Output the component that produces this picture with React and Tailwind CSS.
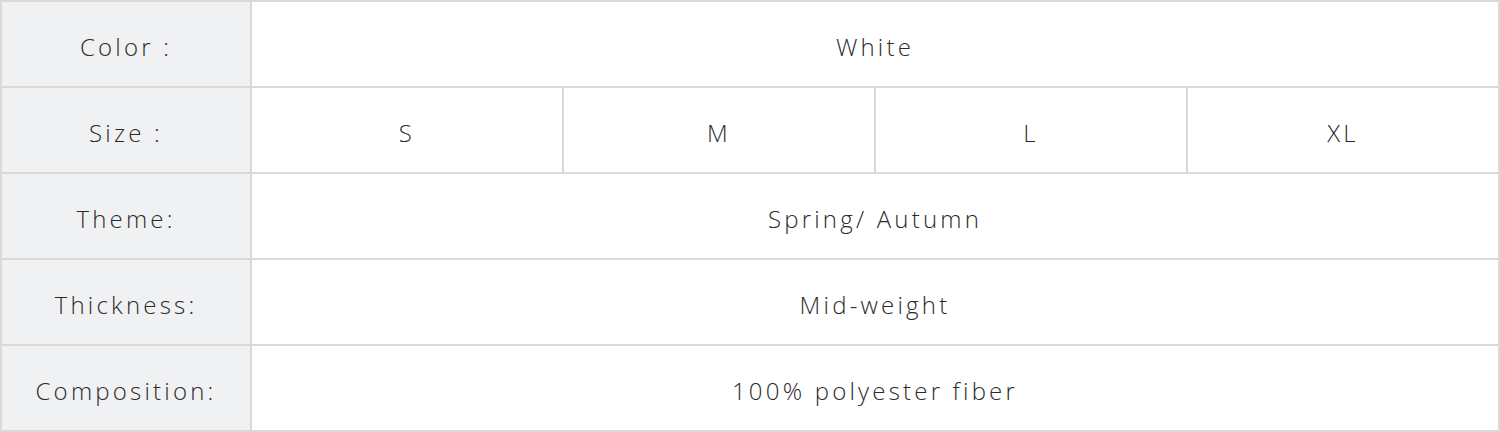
const rows = [
  { label: "Color :", values: ["White"] },
  { label: "Size :", values: ["S", "M", "L", "XL"] },
  { label: "Theme:", values: ["Spring/ Autumn"] },
  { label: "Thickness:", values: ["Mid-weight"] },
  { label: "Composition:", values: ["100% polyester fiber"] },
];

const cell = "border-2 border-[#d9d9d9] text-center text-[24px] tracking-[3.2px] pt-[5px]";

export default function App() {
  return (
    <div className="w-[1500px] h-[432px] bg-white font-['Open_Sans',sans-serif] font-light text-[#2b2b2b]">
      <table className="w-full border-collapse table-fixed border-2 border-[#d9d9d9]">
        <colgroup>
          <col className="w-[250px]" />
          <col />
          <col />
          <col />
          <col />
        </colgroup>
        <tbody>
          {rows.map((row) => (
            <tr key={row.label} className="h-[86px]">
              <td className={`${cell} bg-[#f0f1f3]`}>{row.label}</td>
              {row.values.length === 1 ? (
                <td colSpan={4} className={cell}>
                  {row.values[0]}
                </td>
              ) : (
                row.values.map((v) => (
                  <td key={v} className={cell}>
                    {v}
                  </td>
                ))
              )}
            </tr>
          ))}
        </tbody>
      </table>
    </div>
  );
}
